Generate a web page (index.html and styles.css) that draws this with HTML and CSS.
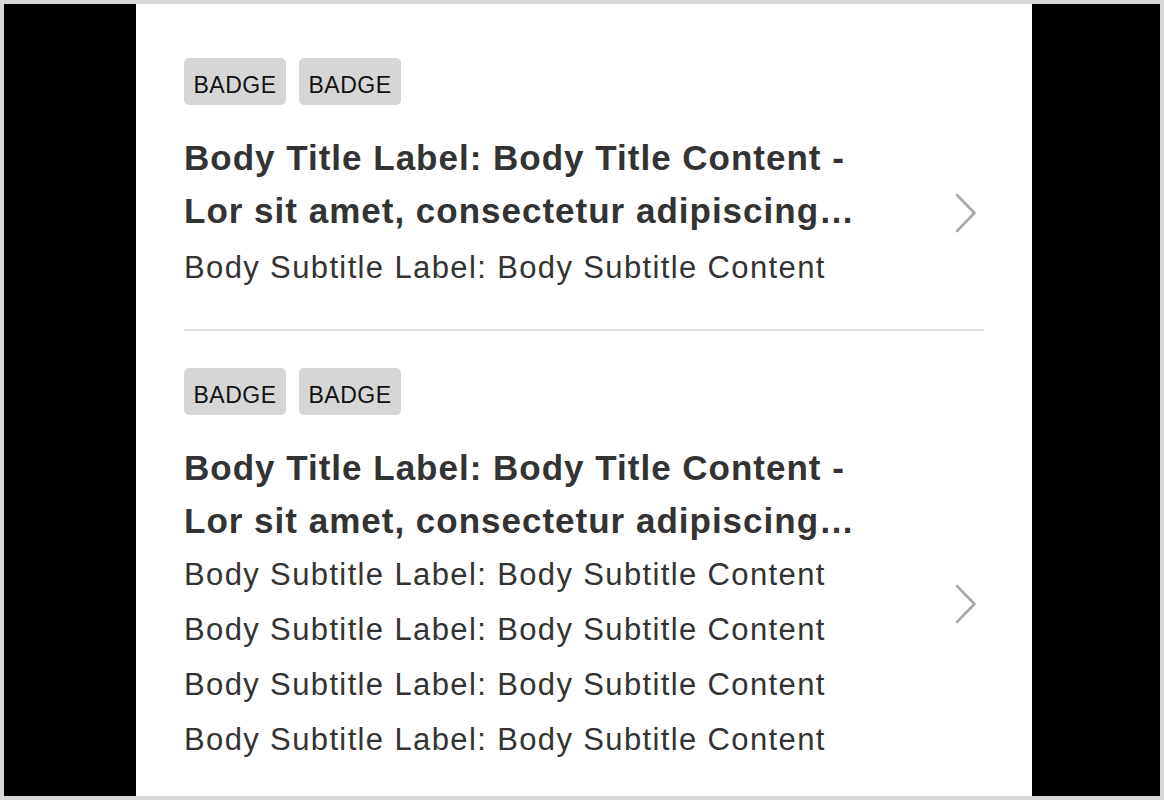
FILE: index.html
```html
<!DOCTYPE html>
<html lang="en">
<head>
<meta charset="utf-8">
<title>List</title>
<link rel="stylesheet" href="styles.css">
</head>
<body>
<div class="frame">
  <main class="panel">
    <section class="item item-first">
      <div class="badges">
        <span class="badge">BADGE</span>
        <span class="badge">BADGE</span>
      </div>
      <div class="body">
        <div class="text">
          <div class="title">Body Title Label: Body Title Content - Lor sit amet, consectetur adipiscing…</div>
          <div class="subtitle">Body Subtitle Label: Body Subtitle Content</div>
        </div>
        <svg class="chevron" width="24" height="40" viewBox="0 0 24 40" aria-hidden="true"><path d="M3 2 L20.5 20 L3 38" fill="none" stroke="#a9a9a9" stroke-width="2.7" stroke-linecap="round" stroke-linejoin="round"/></svg>
      </div>
    </section>
    <section class="item item-second">
      <div class="badges">
        <span class="badge">BADGE</span>
        <span class="badge">BADGE</span>
      </div>
      <div class="body">
        <div class="text">
          <div class="title">Body Title Label: Body Title Content - Lor sit amet, consectetur adipiscing…</div>
          <div class="subtitle">Body Subtitle Label: Body Subtitle Content</div>
          <div class="subtitle">Body Subtitle Label: Body Subtitle Content</div>
          <div class="subtitle">Body Subtitle Label: Body Subtitle Content</div>
          <div class="subtitle">Body Subtitle Label: Body Subtitle Content</div>
        </div>
        <svg class="chevron" width="24" height="40" viewBox="0 0 24 40" aria-hidden="true"><path d="M3 2 L20.5 20 L3 38" fill="none" stroke="#a9a9a9" stroke-width="2.7" stroke-linecap="round" stroke-linejoin="round"/></svg>
      </div>
    </section>
  </main>
</div>
</body>
</html>
```

FILE: styles.css
```css
* { box-sizing: border-box; }

html, body {
  margin: 0;
  height: 100%;
}

body {
  padding: 4px;
  background: #d8d8d8;
  font-family: "Liberation Sans", Arial, sans-serif;
  color: #333333;
}

.frame {
  height: 792px;
  background: #000000;
  padding-left: 132px;
  display: flex;
}

.panel {
  width: 896px;
  height: 100%;
  background: #ffffff;
  padding: 18px 48px 0;
  overflow: hidden;
}

.item {
  padding: 36px 0 34px;
}

.item-first {
  border-bottom: 2px solid #dcdcdc;
}

.item-first .title {
  margin-bottom: 3px;
}

.item-second {
  padding-top: 37px;
}

.badges {
  display: flex;
  gap: 13px;
}

.badge {
  display: block;
  width: 102px;
  height: 47px;
  padding-top: 8px;
  line-height: 39px;
  text-align: center;
  font-size: 23px;
  letter-spacing: 0.5px;
  font-weight: 400;
  color: #111111;
  background: #d6d6d6;
  border-radius: 5px;
}

.body {
  margin-top: 26px;
  display: flex;
  align-items: center;
}

.text {
  width: 705px;
}

.title {
  font-size: 35px;
  line-height: 53px;
  font-weight: 700;
  letter-spacing: 1px;
  color: #333333;
}

.subtitle {
  font-size: 31px;
  line-height: 55px;
  letter-spacing: 1.37px;
  color: #333333;
  white-space: nowrap;
}

.chevron {
  display: block;
  margin-left: auto;
  margin-right: 6px;
  flex: none;
}
```
